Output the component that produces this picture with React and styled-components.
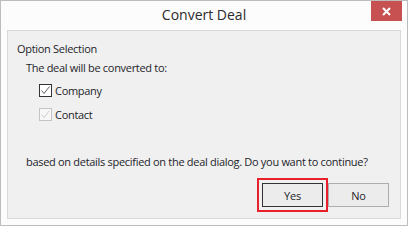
import React from 'react';
import styled, { createGlobalStyle } from 'styled-components';

const GlobalStyle = createGlobalStyle`
  html, body {
    margin: 0;
    padding: 0;
    background: #ffffff;
  }
  * {
    box-sizing: border-box;
  }
`;

const Window = styled.div`
  width: 408px;
  height: 226px;
  display: flex;
  flex-direction: column;
  background: #fcfcfc;
  border: 1px solid #bdbdbd;
  font-family: 'Segoe UI', 'Open Sans', sans-serif;
  font-size: 11px;
  letter-spacing: -0.3px;
  color: #1e1e2a;
`;

const TitleBar = styled.header`
  height: 29px;
  flex-shrink: 0;
  display: grid;
  grid-template-columns: 1fr auto 1fr;
  align-items: start;
`;

const Title = styled.h1`
  grid-column: 2;
  margin: 0;
  padding-top: 4px;
  font-size: 14px;
  font-weight: 400;
  letter-spacing: 0;
  line-height: 20px;
  color: #2b2b2b;
`;

const CloseButton = styled.button`
  grid-column: 3;
  justify-self: end;
  width: 31px;
  height: 20px;
  margin-right: 5px;
  padding: 0;
  border: none;
  background: #c75050;
  display: flex;
  align-items: center;
  justify-content: center;
`;

const Panel = styled.section`
  flex: 1;
  margin: 0 6px 6px;
  padding: 10px 11px 11px 9px;
  display: flex;
  flex-direction: column;
  background: #f0f0f0;
  border: 1px solid #d9d9d9;
`;

const Legend = styled.div`
  line-height: 16px;
`;

const Line = styled.div`
  line-height: 16px;
  margin-left: 9px;
  margin-top: ${props => props.gap}px;
`;

const CheckRow = styled.label`
  display: flex;
  align-items: center;
  height: 16px;
  margin-left: 22px;
  margin-top: ${props => props.gap}px;
  color: #1e1e2a;
`;

const Box = styled.span`
  width: 13px;
  height: 13px;
  margin-right: 3px;
  display: flex;
  align-items: center;
  justify-content: center;
  background: ${props => (props.disabled ? '#f7f7f7' : '#ffffff')};
  border: 1px solid ${props => (props.disabled ? '#c4c4c4' : '#333333')};
`;

const Buttons = styled.div`
  margin-top: auto;
  display: flex;
  justify-content: flex-end;
  gap: 5px;
`;

const Button = styled.button`
  width: 61px;
  height: 24px;
  padding: 0;
  font-family: inherit;
  font-size: 11px;
  letter-spacing: -0.2px;
  color: #1e1e2a;
  background: #ececec;
  border: 1px solid ${props => (props.focused ? '#333333' : '#adadad')};
  outline: ${props => (props.highlighted ? '2px solid #e8202a' : 'none')};
  outline-offset: 3px;
`;

const Check = ({ disabled }) => (
  <Box disabled={disabled}>
    <svg width="11" height="11" viewBox="0 0 11 11">
      <path
        d="M1.5 5.5 L4 8.5 L9.5 1.5"
        fill="none"
        stroke={disabled ? '#c8c8c8' : '#4a4a4a'}
        strokeWidth="0.9"
      />
    </svg>
  </Box>
);

const App = () => (
  <>
    <GlobalStyle />
    <Window>
      <TitleBar>
        <Title>Convert Deal</Title>
        <CloseButton aria-label="Close">
          <svg width="9" height="9" viewBox="0 0 9 9">
            <path d="M1 1 L8 8 M8 1 L1 8" stroke="#ffffff" strokeWidth="2" />
          </svg>
        </CloseButton>
      </TitleBar>
      <Panel>
        <Legend>Option Selection</Legend>
        <Line gap={3}>The deal will be converted to:</Line>
        <CheckRow gap={6}>
          <Check />
          Company
        </CheckRow>
        <CheckRow gap={8}>
          <Check disabled />
          Contact
        </CheckRow>
        <Line gap={32}>based on details specified on the deal dialog. Do you want to continue?</Line>
        <Buttons>
          <Button focused highlighted>Yes</Button>
          <Button>No</Button>
        </Buttons>
      </Panel>
    </Window>
  </>
);

export default App;
